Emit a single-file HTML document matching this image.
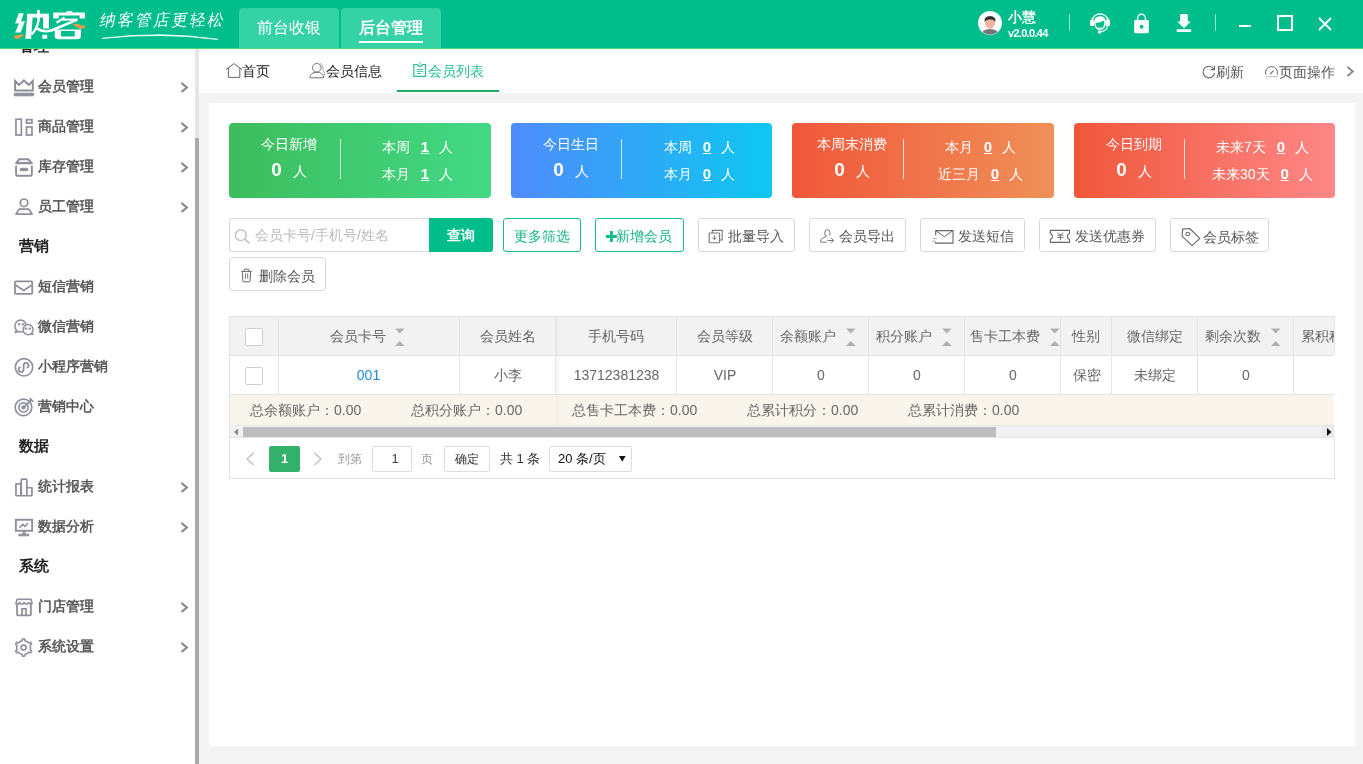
<!DOCTYPE html><html><head><meta charset="utf-8"><title>member list</title><style>
*{margin:0;padding:0;box-sizing:border-box}
html,body{width:1363px;height:764px;overflow:hidden;will-change:transform;background:#f4f4f4;font-family:"Liberation Sans",sans-serif;color:#333}
.a{position:absolute;white-space:nowrap}
svg{position:absolute;overflow:visible}
#hdr{position:absolute;left:0;top:0;width:1363px;height:49px;background:#00be8b;border-bottom:1px solid #4fd672;z-index:5}
.htab{position:absolute;top:8px;height:40px;background:#34d2a5;border-radius:4px 4px 0 0;color:#fff;font-size:16px;text-align:center;line-height:40px}
#side{position:absolute;left:0;top:49px;width:195px;height:715px;background:#fff;overflow:hidden}
.mi{position:absolute;left:38px;font-size:14px;font-weight:normal;color:#505050;line-height:20px;white-space:nowrap;-webkit-text-stroke:0.45px #505050}
.mh{position:absolute;left:19px;font-size:15px;font-weight:bold;color:#222;line-height:20px;white-space:nowrap}
#tabbar{position:absolute;left:199px;top:48px;width:1164px;height:45px;background:#fff}
#panel{position:absolute;left:209px;top:103px;width:1146px;height:643px;background:#fff;border-radius:2px}
.card{position:absolute;top:123px;width:262px;height:75px;border-radius:4px;color:#fff}
.btn{position:absolute;height:34px;border:1px solid #d9d9d9;border-radius:3px;background:#fff;font-size:14px;color:#555;line-height:34px;white-space:nowrap}
.th{position:absolute;top:317px;height:38px;line-height:38px;text-align:center;font-size:14px;color:#666;white-space:nowrap}
.td{position:absolute;top:356px;height:38px;line-height:38px;text-align:center;font-size:14px;color:#666;white-space:nowrap}
</style></head><body>
<div id="hdr">
<svg style="left:0;top:0" width="100" height="48" viewBox="0 0 100 48"><g fill="#fff"><path d="M18.7 13.3 H23.8 L20.9 21.35 H24.9 L20.7 32.5 H15.1 L19.1 23.6 H15.1 Z"/><path d="M27.3 13.8 H48.9 V17.4 H32.6 L31.1 38.7 H25.35 Z"/><rect x="43.15" y="13.8" width="5.8" height="14.7"/><rect x="37.1" y="10" width="2.7" height="11.5"/><rect x="42.3" y="34.7" width="4.9" height="4"/><rect x="66.7" y="11.1" width="5.6" height="2"/><path d="M53.3 12.5 H84.9 V18.5 H79.6 V15.6 H58.7 V18.5 H53.3 Z"/><path d="M54.7 29.4 H80.9 V36 Q80.9 39.2 77 39.2 H58.6 Q54.7 39.2 54.7 36 Z M60.9 31 V36.5 H74.7 V31 Z" fill-rule="evenodd"/></g><g fill="none" stroke="#fff"><path d="M38.4 21 Q37 29 31.5 34.5" stroke-width="2.4"/><path d="M37 28.3 Q43 33 52 30.2 L77.4 19.6" stroke-width="2.6"/><path d="M56.5 22.7 L64.5 17.6" stroke-width="2.3"/><path d="M61.3 19.6 H77.4" stroke-width="2"/></g><g fill="#f2994a"><path d="M14.2 35.4 L23.35 34.26 L24 35.15 L18.7 38.7 L14.7 38.7 Z"/><path d="M72.9 24.47 L76.5 23.58 L82.7 25.8 L84.94 25.36 L84.94 28 L80 28.9 L74.7 25.8 Z"/></g></svg>
<div class="a" style="left:99px;top:10px;font-size:16px;line-height:20px;color:#fff;font-style:italic;font-weight:normal;transform:rotate(-4deg)">纳</div>
<div class="a" style="left:117px;top:10px;font-size:16px;line-height:20px;color:#fff;font-style:italic;font-weight:normal;transform:rotate(-4deg)">客</div>
<div class="a" style="left:135px;top:10px;font-size:16px;line-height:20px;color:#fff;font-style:italic;font-weight:normal;transform:rotate(-4deg)">管</div>
<div class="a" style="left:153px;top:10px;font-size:16px;line-height:20px;color:#fff;font-style:italic;font-weight:normal;transform:rotate(-4deg)">店</div>
<div class="a" style="left:171px;top:10px;font-size:16px;line-height:20px;color:#fff;font-style:italic;font-weight:normal;transform:rotate(-4deg)">更</div>
<div class="a" style="left:189px;top:10px;font-size:16px;line-height:20px;color:#fff;font-style:italic;font-weight:normal;transform:rotate(-4deg)">轻</div>
<div class="a" style="left:207px;top:10px;font-size:16px;line-height:20px;color:#fff;font-style:italic;font-weight:normal;transform:rotate(-4deg)">松</div>
<svg style="left:100px;top:30px" width="125" height="12" viewBox="0 0 125 12"><path d="M2 8.4 Q60 0.5 118 9.4 Q60 2.2 2 8.4Z" fill="#fff" stroke="#fff" stroke-width="0.7"/></svg>
<div class="htab" style="left:239px;width:100px">前台收银</div>
<div class="htab" style="left:341px;width:100px;font-weight:bold">后台管理<div style="position:absolute;left:18px;top:33px;width:64px;height:2px;background:#fff"></div></div>
<svg style="left:978px;top:11px" width="24" height="24" viewBox="0 0 24 24"><circle cx="12" cy="12" r="12" fill="#fff"/><clipPath id="av"><circle cx="12" cy="12" r="11.5"/></clipPath><g clip-path="url(#av)"><path d="M3 24 Q4 18 12 18 Q20 18 21 24 Z" fill="#757575"/><ellipse cx="12" cy="12" rx="5" ry="5.8" fill="#f0b49e"/><path d="M6.5 11 Q6 5 12 5 Q18 5 17.5 11 Q16 8 12 8.5 Q8 8 6.5 11Z" fill="#333"/></g></svg>
<div class="a" style="left:1008px;top:7px;font-size:14px;line-height:20px;color:#fff;-webkit-text-stroke:0.4px #fff">小慧</div>
<div class="a" style="left:1008px;top:26px;font-size:11px;line-height:14px;color:#fff;font-weight:bold;letter-spacing:-0.7px">v2.0.0.44</div>
<div class="a" style="left:1069px;top:14px;width:1px;height:17px;background:rgba(255,255,255,.6)"></div>
<div class="a" style="left:1215px;top:14px;width:1px;height:17px;background:rgba(255,255,255,.6)"></div>
<svg style="left:1085px;top:8px" width="30" height="30" viewBox="0 0 30 30"><g fill="#fff" stroke="none"><rect x="5.1" y="11.8" width="4.1" height="6.2" rx="1"/><rect x="20.8" y="11.4" width="4.2" height="6.6" rx="1"/><path d="M9.2 14.5 Q9.2 8.2 15 8.2 Q20.8 8.2 20.8 14 L20.3 17.5 Q19.5 14 18.2 12.4 Q16 14.5 10 15.2 Z"/><circle cx="14.5" cy="24.1" r="1.6"/></g><g fill="none" stroke="#fff"><path d="M7 12.5 A8.3 8.3 0 0 1 23.2 12.5" stroke-width="1.6"/><path d="M9.8 14.5 Q10 20.5 15 21.8 Q19.8 20.5 20 15" stroke-width="1.4"/><path d="M13.2 19.7 Q14.8 20.6 16.5 19.7" stroke-width="0.9"/><path d="M22.6 17.5 Q22.2 23.2 15 24.1" stroke-width="1.2"/></g></svg>
<svg style="left:1134px;top:13px" width="16" height="21" viewBox="0 0 16 21"><path d="M3.6 7.5 V5.2 A3.9 3.9 0 0 1 11.4 5.2 V7.5" fill="none" stroke="#fff" stroke-width="1.4"/><rect x="0.2" y="7.1" width="14.6" height="13.1" rx="1.2" fill="#fff"/><circle cx="7.6" cy="13.75" r="1.9" fill="#00be8b"/></svg>
<svg style="left:1176px;top:13px" width="16" height="20" viewBox="0 0 16 20"><path d="M4.1 8.4 V2.2 Q4.1 0.9 5.4 0.9 H10.5 Q11.8 0.9 11.8 2.2 V8.4 H14.7 L8 15.3 L1.3 8.4 Z" fill="#fff"/><rect x="0.5" y="16.3" width="14.9" height="2.8" rx="1.4" fill="#fff"/></svg>
<div class="a" style="left:1239px;top:25px;width:12px;height:2px;background:#fff"></div>
<div class="a" style="left:1277px;top:15px;width:16px;height:16px;border:2px solid #fff"></div>
<svg style="left:1318px;top:17px" width="14" height="14" viewBox="0 0 14 14"><path d="M1 1 L13 13 M13 1 L1 13" stroke="#fff" stroke-width="1.8"/></svg>
</div>
<div id="side">
<div class="mh" style="top:-13px">管理</div>
<div class="mi" style="top:27px">会员管理</div>
<svg style="left:14px;top:28px" width="20" height="22" viewBox="0 0 20 22" fill="#8e8f9b" stroke="#8e8f9b"><path d="M1.1 13.5 V4 L5 7.9 L9.9 3.4 L14.9 7.9 L18.8 4 V13.5 Z" fill="none" stroke-width="2" stroke-linejoin="miter"/><rect x="0.1" y="16.2" width="19.7" height="2.6" rx="1"/></svg>
<svg style="left:180px;top:33px" width="9" height="11" viewBox="0 0 9 11"><path d="M1.5 1 L6.8 5.5 L1.5 10" fill="none" stroke="#858591" stroke-width="2.2"/></svg>
<div class="mi" style="top:67px">商品管理</div>
<svg style="left:14px;top:68px" width="20" height="22" viewBox="0 0 20 22" fill="#8e8f9b" stroke="#8e8f9b"><rect x="1.95" y="2.25" width="5.4" height="15.8" fill="none" stroke-width="1.7"/><rect x="12.45" y="2.65" width="5.5" height="3.4" fill="none" stroke-width="1.7"/><rect x="12.45" y="9.95" width="5.5" height="8.1" fill="none" stroke-width="1.7"/></svg>
<svg style="left:180px;top:73px" width="9" height="11" viewBox="0 0 9 11"><path d="M1.5 1 L6.8 5.5 L1.5 10" fill="none" stroke="#858591" stroke-width="2.2"/></svg>
<div class="mi" style="top:107px">库存管理</div>
<svg style="left:14px;top:108px" width="20" height="22" viewBox="0 0 20 22" fill="#8e8f9b" stroke="#8e8f9b"><path d="M2.2 6.1 L5.3 2.2 H14.2 L17.7 6.1 Z" fill="none" stroke-width="2.1" stroke-linejoin="round"/><path d="M2.05 8.7 V17.4 a1.3 1.3 0 0 0 1.3 1.3 H16.55 a1.3 1.3 0 0 0 1.3-1.3 V8.7" fill="none" stroke-width="1.9"/><rect x="6" y="11.3" width="7.9" height="2.4" rx="1.2"/></svg>
<svg style="left:180px;top:113px" width="9" height="11" viewBox="0 0 9 11"><path d="M1.5 1 L6.8 5.5 L1.5 10" fill="none" stroke="#858591" stroke-width="2.2"/></svg>
<div class="mi" style="top:147px">员工管理</div>
<svg style="left:14px;top:148px" width="20" height="22" viewBox="0 0 20 22" fill="#8e8f9b" stroke="#8e8f9b"><circle cx="10" cy="5.8" r="3.8" fill="none" stroke-width="1.7"/><path d="M1.9 17.1 L5.2 12.1 H14.7 L18.1 17.1 Z" fill="none" stroke-width="1.7" stroke-linejoin="round"/></svg>
<svg style="left:180px;top:153px" width="9" height="11" viewBox="0 0 9 11"><path d="M1.5 1 L6.8 5.5 L1.5 10" fill="none" stroke="#858591" stroke-width="2.2"/></svg>
<div class="mh" style="top:187px">营销</div>
<div class="mi" style="top:227px">短信营销</div>
<svg style="left:14px;top:228px" width="20" height="22" viewBox="0 0 20 22" fill="#8e8f9b" stroke="#8e8f9b"><rect x="0.95" y="4.45" width="17.3" height="12.4" rx="1" fill="none" stroke-width="1.8"/><path d="M1.5 8 L9.8 13.4 L17.8 8" fill="none" stroke-width="1.7"/></svg>
<div class="mi" style="top:267px">微信营销</div>
<svg style="left:14px;top:268px" width="20" height="22" viewBox="0 0 20 22" fill="#8e8f9b" stroke="#8e8f9b"><ellipse cx="6.6" cy="8.9" rx="5.7" ry="6" fill="none" stroke-width="1.5"/><path d="M2.6 13 L1.2 15.6 L4.6 14.5" fill="#fff" stroke-width="1.4" stroke-linejoin="round"/><rect x="4.4" y="6.8" width="1.5" height="1"/><rect x="8.4" y="6.8" width="1.5" height="1"/><path d="M17.6 15.8 L19.1 17.4 L16.4 17" fill="#fff" stroke-width="1.4" stroke-linejoin="round"/><ellipse cx="14.1" cy="12.55" rx="5" ry="5.1" fill="#fff" stroke-width="1.5"/><rect x="11.1" y="11.1" width="1.5" height="1"/><rect x="15" y="11.1" width="1.5" height="1"/></svg>
<div class="mi" style="top:307px">小程序营销</div>
<svg style="left:14px;top:308px" width="20" height="22" viewBox="0 0 20 22" fill="#8e8f9b" stroke="#8e8f9b"><circle cx="10" cy="10.3" r="8.7" fill="none" stroke-width="1.6"/><path d="M6.5 10 A2.5 2.5 0 1 0 9.6 12.6 V8.4 A2.5 2.5 0 1 1 12.8 10.8" fill="none" stroke-width="1.8"/></svg>
<div class="mi" style="top:347px">营销中心</div>
<svg style="left:14px;top:348px" width="20" height="22" viewBox="0 0 20 22" fill="#8e8f9b" stroke="#8e8f9b"><circle cx="9.5" cy="10.4" r="8.3" fill="none" stroke-width="1.7"/><circle cx="9.5" cy="10.4" r="4.6" fill="none" stroke-width="1.7"/><circle cx="9.5" cy="10.4" r="1.7"/><path d="M9.5 10.4 L17.2 3.2" stroke-width="1.7"/><path d="M15.8 1.3 L16.8 3.6 L19.2 4.4 L17.5 2.6Z" stroke-width="1.2" stroke-linejoin="round"/></svg>
<div class="mh" style="top:387px">数据</div>
<div class="mi" style="top:427px">统计报表</div>
<svg style="left:14px;top:428px" width="20" height="22" viewBox="0 0 20 22" fill="#8e8f9b" stroke="#8e8f9b"><path d="M1.95 18.75 V6.85 H6.75 V18.75 M7.25 18.75 V3.2 Q7.25 2.15 8.3 2.15 H11.8 Q12.85 2.15 12.85 3.2 V18.75 M12.85 10.75 H17.95 V17.9 a0.85 0.85 0 0 1 -0.85 0.85 H2.8 a0.85 0.85 0 0 1 -0.85 -0.85" fill="none" stroke-width="1.7" stroke-linejoin="round"/></svg>
<svg style="left:180px;top:433px" width="9" height="11" viewBox="0 0 9 11"><path d="M1.5 1 L6.8 5.5 L1.5 10" fill="none" stroke="#858591" stroke-width="2.2"/></svg>
<div class="mi" style="top:467px">数据分析</div>
<svg style="left:14px;top:468px" width="20" height="22" viewBox="0 0 20 22" fill="#8e8f9b" stroke="#8e8f9b"><rect x="1.85" y="2.75" width="16.3" height="11" fill="none" stroke-width="1.9"/><path d="M5.4 10.6 L8.9 7.4 L11 9.4 L13.9 6" fill="none" stroke-width="1.6"/><rect x="9.1" y="14" width="1.9" height="3.4"/><rect x="4.7" y="17.2" width="10.3" height="1.6" rx="0.5"/></svg>
<svg style="left:180px;top:473px" width="9" height="11" viewBox="0 0 9 11"><path d="M1.5 1 L6.8 5.5 L1.5 10" fill="none" stroke="#858591" stroke-width="2.2"/></svg>
<div class="mh" style="top:507px">系统</div>
<div class="mi" style="top:547px">门店管理</div>
<svg style="left:14px;top:548px" width="20" height="22" viewBox="0 0 20 22" fill="#8e8f9b" stroke="#8e8f9b"><path d="M3.05 7.3 V17.3 a1.1 1.1 0 0 0 1.1 1.1 H15.8 a1.1 1.1 0 0 0 1.1-1.1 V7.3" fill="none" stroke-width="1.8"/><path d="M1.9 6.6 L3.1 2.2 H17 L18.1 6.6 L16.2 7 L14.9 5.6 L13.6 7 L11.5 7 L10.2 5.6 L8.9 7 L6.7 7 L5.5 5.6 L4.2 7 Z" fill="none" stroke-width="1.6" stroke-linejoin="round"/><path d="M8 18 V11.9 H12 V18" fill="none" stroke-width="1.7"/></svg>
<svg style="left:180px;top:553px" width="9" height="11" viewBox="0 0 9 11"><path d="M1.5 1 L6.8 5.5 L1.5 10" fill="none" stroke="#858591" stroke-width="2.2"/></svg>
<div class="mi" style="top:587px">系统设置</div>
<svg style="left:14px;top:588px" width="20" height="22" viewBox="0 0 20 22" fill="#8e8f9b" stroke="#8e8f9b"><path d="M6.98 4.11 L8.26 3.73 L8.54 1.96 L10.66 1.96 L10.94 3.73 L13.91 5.08 L14.88 6.01 L16.55 5.36 L17.61 7.20 L16.22 8.32 L16.53 11.57 L16.22 12.88 L17.61 14.00 L16.55 15.84 L14.88 15.19 L12.22 17.09 L10.94 17.47 L10.66 19.24 L8.54 19.24 L8.26 17.47 L5.29 16.12 L4.32 15.19 L2.65 15.84 L1.59 14.00 L2.98 12.88 L2.67 9.63 L2.98 8.32 L1.59 7.20 L2.65 5.36 L4.32 6.01Z" fill="none" stroke-width="1.6" stroke-linejoin="round"/><circle cx="9.6" cy="10.6" r="2.5" fill="none" stroke-width="1.6"/></svg>
<svg style="left:180px;top:593px" width="9" height="11" viewBox="0 0 9 11"><path d="M1.5 1 L6.8 5.5 L1.5 10" fill="none" stroke="#858591" stroke-width="2.2"/></svg>
</div>
<div style="position:absolute;left:195px;top:48px;width:4px;height:716px;background:#e6e6e6"></div>
<div style="position:absolute;left:195px;top:138px;width:4px;height:626px;background:#a9a9a9"></div>
<div id="tabbar"></div>
<svg style="left:225px;top:62px" width="18" height="17" viewBox="0 0 18 17"><path d="M1 7.6 L9 1.6 L17 7.6 M3.4 5.9 V15.4 H14.8 V5.9" fill="none" stroke="#666" stroke-width="1"/></svg>
<div class="a" style="left:242px;top:61px;font-size:14px;line-height:20px;color:#222">首页</div>
<svg style="left:309px;top:62px" width="18" height="17" viewBox="0 0 18 17"><circle cx="7.8" cy="5.7" r="4.3" fill="none" stroke="#777" stroke-width="1"/><path d="M0.8 15.8 Q1.5 10.2 7.8 10.2 Q14 10.2 14.8 15.8 Z" fill="none" stroke="#777" stroke-width="1"/><path d="M11 1.6 Q14.6 2.5 13.8 7.5 Q15.6 9.5 15.6 13.5" fill="none" stroke="#999" stroke-width="0.9"/></svg>
<div class="a" style="left:326px;top:61px;font-size:14px;line-height:20px;color:#222">会员信息</div>
<svg style="left:413px;top:62px" width="14" height="16" viewBox="0 0 14 16"><path d="M4.3 2.5 H0.8 V14.4 H12.5 V2.5 H9.2" fill="none" stroke="#22c08f" stroke-width="1.2"/><path d="M4.2 2.2 L5.3 4.1 H8.2 L9.3 2.2 M5.9 1 H7.6" fill="none" stroke="#22c08f" stroke-width="1.2"/><path d="M3.6 7.4 H10.4 M3.6 9.4 H10.4 M3.9 11.5 H7.9" stroke="#22c08f" stroke-width="0.9"/></svg>
<div class="a" style="left:428px;top:61px;font-size:14px;line-height:20px;color:#22c08f">会员列表</div>
<div class="a" style="left:397px;top:90px;width:102px;height:2px;background:#25ab60"></div>
<svg style="left:1202px;top:65px" width="14" height="14" viewBox="0 0 14 14"><path d="M11.8 4 A5.8 5.8 0 1 0 12.6 8" fill="none" stroke="#666" stroke-width="1.1"/><path d="M12.5 0.8 V4.6 H8.7" fill="none" stroke="#666" stroke-width="1.1"/></svg>
<div class="a" style="left:1216px;top:62px;font-size:14px;line-height:20px;color:#555">刷新</div>
<svg style="left:1264px;top:65px" width="15" height="13" viewBox="0 0 15 13"><path d="M1.86 9.6 A6 6 0 1 1 13.14 9.6" fill="none" stroke="#666" stroke-width="1"/><path d="M1.5 11.6 H13.5" stroke="#c8c8c8" stroke-width="1.2"/><path d="M6 9.2 L9.6 5.6" stroke="#666" stroke-width="1.1"/></svg>
<div class="a" style="left:1279px;top:62px;font-size:14px;line-height:20px;color:#555">页面操作</div>
<svg style="left:1346px;top:66px" width="9" height="11" viewBox="0 0 9 11"><path d="M1.5 1 L6.8 5.5 L1.5 10" fill="none" stroke="#8b8b97" stroke-width="2"/></svg>
<div id="panel"></div>
<div class="card" style="left:229px;width:262px;background:linear-gradient(90deg,#3dbd5d,#42d985)">
<div class="a" style="left:0;width:120px;top:11px;text-align:center;font-size:14px;line-height:20px">今日新增</div>
<div class="a" style="left:0;width:120px;top:35px;text-align:center;font-size:14px;line-height:24px"><b style="font-size:19px;margin-right:11px">0</b>人</div>
<div class="a" style="left:111px;top:16px;width:1px;height:40px;background:rgba(255,255,255,.8)"></div>
<div class="a" style="left:112px;width:153px;top:14px;text-align:center;font-size:14px;line-height:20px">本周<b style="font-size:15px;text-decoration:underline;margin:0 10px 0 11px">1</b>人</div>
<div class="a" style="left:112px;width:153px;top:41px;text-align:center;font-size:14px;line-height:20px">本月<b style="font-size:15px;text-decoration:underline;margin:0 10px 0 11px">1</b>人</div>
</div>
<div class="card" style="left:511px;width:261px;background:linear-gradient(90deg,#4f8bfc,#0ec7f1)">
<div class="a" style="left:0;width:120px;top:11px;text-align:center;font-size:14px;line-height:20px">今日生日</div>
<div class="a" style="left:0;width:120px;top:35px;text-align:center;font-size:14px;line-height:24px"><b style="font-size:19px;margin-right:11px">0</b>人</div>
<div class="a" style="left:110px;top:16px;width:1px;height:40px;background:rgba(255,255,255,.8)"></div>
<div class="a" style="left:112px;width:153px;top:14px;text-align:center;font-size:14px;line-height:20px">本周<b style="font-size:15px;text-decoration:underline;margin:0 10px 0 11px">0</b>人</div>
<div class="a" style="left:112px;width:153px;top:41px;text-align:center;font-size:14px;line-height:20px">本月<b style="font-size:15px;text-decoration:underline;margin:0 10px 0 11px">0</b>人</div>
</div>
<div class="card" style="left:792px;width:262px;background:linear-gradient(90deg,#f0573a,#f09058)">
<div class="a" style="left:0;width:120px;top:11px;text-align:center;font-size:14px;line-height:20px">本周末消费</div>
<div class="a" style="left:0;width:120px;top:35px;text-align:center;font-size:14px;line-height:24px"><b style="font-size:19px;margin-right:11px">0</b>人</div>
<div class="a" style="left:111px;top:16px;width:1px;height:40px;background:rgba(255,255,255,.8)"></div>
<div class="a" style="left:112px;width:153px;top:14px;text-align:center;font-size:14px;line-height:20px">本月<b style="font-size:15px;text-decoration:underline;margin:0 10px 0 11px">0</b>人</div>
<div class="a" style="left:112px;width:153px;top:41px;text-align:center;font-size:14px;line-height:20px">近三月<b style="font-size:15px;text-decoration:underline;margin:0 10px 0 11px">0</b>人</div>
</div>
<div class="card" style="left:1074px;width:261px;background:linear-gradient(90deg,#f0573a,#fe8787)">
<div class="a" style="left:0;width:120px;top:11px;text-align:center;font-size:14px;line-height:20px">今日到期</div>
<div class="a" style="left:0;width:120px;top:35px;text-align:center;font-size:14px;line-height:24px"><b style="font-size:19px;margin-right:11px">0</b>人</div>
<div class="a" style="left:110px;top:16px;width:1px;height:40px;background:rgba(255,255,255,.8)"></div>
<div class="a" style="left:112px;width:153px;top:14px;text-align:center;font-size:14px;line-height:20px">未来7天<b style="font-size:15px;text-decoration:underline;margin:0 10px 0 11px">0</b>人</div>
<div class="a" style="left:112px;width:153px;top:41px;text-align:center;font-size:14px;line-height:20px">未来30天<b style="font-size:15px;text-decoration:underline;margin:0 10px 0 11px">0</b>人</div>
</div>
<div class="a" style="left:229px;top:218px;width:200px;height:34px;border:1px solid #d9d9d9;border-right:0;border-radius:3px 0 0 3px;background:#fff"></div>
<svg style="left:232px;top:227px" width="20" height="19" viewBox="0 0 20 19"><circle cx="8.8" cy="8.2" r="5.4" fill="none" stroke="#c4c4c4" stroke-width="1.5"/><path d="M12.7 12.2 L17.3 16.4" stroke="#c4c4c4" stroke-width="1.7"/></svg>
<div class="a" style="left:255px;top:225px;font-size:14px;line-height:20px;color:#bbb">会员卡号/手机号/姓名</div>
<div class="a" style="left:429px;top:218px;width:64px;height:34px;background:#00bd8a;border-radius:0 3px 3px 0;color:#fff;font-weight:bold;font-size:14px;line-height:34px;text-align:center">查询</div>
<div class="btn" style="left:503px;top:218px;width:78px;border-color:#14bd8b;color:#17b488;text-align:center">更多筛选</div>
<div class="btn" style="left:595px;top:218px;width:89px;border-color:#14bd8b;color:#17b488"><svg style="left:9px;top:12px" width="12" height="12" viewBox="0 0 12 12"><path d="M0.9 5.5 H11.9 M6.4 0 V11" stroke="#12bd8a" stroke-width="2.9"/></svg><span class="a" style="left:20px;top:0">新增会员</span></div>
<div class="btn" style="left:698px;top:218px;width:97px"><svg style="left:9px;top:9px" width="16" height="16" viewBox="0 0 16 16"><path d="M4.3 5 V2.4 H14.2 V12 H11.6" fill="none" stroke="#777" stroke-width="1.1"/><rect x="1.2" y="5" width="10.4" height="9.7" rx="0.8" fill="#fff" stroke="#777" stroke-width="1.1"/><path d="M6.4 7.2 V11.5 M4.1 9.4 L6.4 11.7 L8.7 9.4" fill="none" stroke="#777" stroke-width="1"/></svg><span class="a" style="left:29px;top:0px">批量导入</span></div>
<div class="btn" style="left:809px;top:218px;width:97px"><svg style="left:10px;top:9px" width="16" height="16" viewBox="0 0 16 16"><path d="M6.9 8.3 Q4.4 7.8 4.6 4.9 Q4.8 1.6 7.4 1.6 Q10.1 1.6 10 4.9 Q10 6.6 9.3 7.7" fill="none" stroke="#777" stroke-width="1"/><path d="M6 8.6 Q2.4 9.8 0.7 11.8 V14.2 H6.9" fill="none" stroke="#777" stroke-width="1"/><path d="M7.4 12.5 H13.6 M11.1 10.1 L13.7 12.5 L11.1 14.9" fill="none" stroke="#777" stroke-width="1"/></svg><span class="a" style="left:29px;top:0px">会员导出</span></div>
<div class="btn" style="left:920px;top:218px;width:105px"><svg style="left:10px;top:9px" width="24" height="18" viewBox="0 0 24 18"><path d="M4.7 7.5 V2.6 H22 V15.1 H4.7 V14" fill="none" stroke="#666" stroke-width="1.1"/><path d="M5 2.8 L13.3 8.6 L21.7 2.8" fill="none" stroke="#666" stroke-width="1"/><path d="M2.3 10.5 H5.8 M1.2 13.2 H4.7" stroke="#999" stroke-width="0.9"/></svg><span class="a" style="left:37px;top:0px">发送短信</span></div>
<div class="btn" style="left:1039px;top:218px;width:117px"><svg style="left:9px;top:9px" width="22" height="17" viewBox="0 0 22 17"><path d="M1.3 2.4 H20.5 V5.5 Q18.3 6.3 18.3 8.4 Q18.3 10.4 20.5 11.2 V14.4 H1.3 V11.2 Q3.5 10.4 3.5 8.4 Q3.5 6.3 1.3 5.5 Z" fill="none" stroke="#666" stroke-width="1.1" stroke-linejoin="round"/><path d="M9 4.6 L11.4 7.1 L13.8 4.6 M8.3 7.2 H14.5 M8.3 9.4 H14.5 M11.4 7.2 V12.3" fill="none" stroke="#666" stroke-width="0.9"/></svg><span class="a" style="left:35px;top:0px">发送优惠券</span></div>
<div class="btn" style="left:1170px;top:218px;width:99px"><svg style="left:10px;top:8px" width="20" height="20" viewBox="0 0 20 20"><path d="M1.6 2.1 L8.7 1.5 L18.8 11.4 L11.1 18.7 L1.2 9.4 Z" fill="none" stroke="#666" stroke-width="1.1" stroke-linejoin="round"/><circle cx="6.7" cy="7" r="1.8" fill="none" stroke="#666" stroke-width="1.1"/></svg><span class="a" style="left:32px;top:1px">会员标签</span></div>
<div class="btn" style="left:229px;top:257px;width:97px"><svg style="left:10px;top:9px" width="13" height="16" viewBox="0 0 13 16"><path d="M1.1 4.4 H11.8 M4.3 4.2 V2.6 Q4.3 2.2 4.7 2.2 H8.4 Q8.8 2.2 8.8 2.6 V4.2" fill="none" stroke="#666" stroke-width="1"/><path d="M2.2 4.8 L2.9 14 Q3 14.8 3.8 14.8 H9.1 Q9.9 14.8 10 14 L10.7 4.8" fill="none" stroke="#666" stroke-width="1"/><path d="M5.4 6.2 V11.7 M7.7 6.2 V11.7" stroke="#777" stroke-width="1"/></svg><span class="a" style="left:29px;top:1px">删除会员</span></div>
<div class="a" style="left:229px;top:316px;width:1106px;height:163px;border:1px solid #e3e3e3;border-right:0;background:#fff"></div>
<div class="a" style="left:1334px;top:437px;width:1px;height:42px;background:#e3e3e3"></div>
<div class="a" style="left:1334px;top:317px;width:1px;height:38px;background:#e8e8e8"></div>
<div class="a" style="left:230px;top:317px;width:1104px;height:39px;background:#f2f2f2;border-bottom:1px solid #e3e3e3"></div>
<div class="a" style="left:230px;top:394px;width:1104px;height:31px;background:#f9f5ec;border-top:1px solid #e3e3e3"></div>
<div class="a" style="left:230px;top:317px;width:1104px;height:77px;overflow:hidden">
<div class="a" style="left:48px;top:0;width:1px;height:77px;background:#e3e3e3"></div>
<div class="a" style="left:229px;top:0;width:1px;height:77px;background:#e3e3e3"></div>
<div class="a" style="left:325px;top:0;width:1px;height:77px;background:#e3e3e3"></div>
<div class="a" style="left:446px;top:0;width:1px;height:77px;background:#e3e3e3"></div>
<div class="a" style="left:542px;top:0;width:1px;height:77px;background:#e3e3e3"></div>
<div class="a" style="left:638px;top:0;width:1px;height:77px;background:#e3e3e3"></div>
<div class="a" style="left:734px;top:0;width:1px;height:77px;background:#e3e3e3"></div>
<div class="a" style="left:830px;top:0;width:1px;height:77px;background:#e3e3e3"></div>
<div class="a" style="left:881px;top:0;width:1px;height:77px;background:#e3e3e3"></div>
<div class="a" style="left:967px;top:0;width:1px;height:77px;background:#e3e3e3"></div>
<div class="a" style="left:1063px;top:0;width:1px;height:77px;background:#e3e3e3"></div>
<div class="a" style="left:100px;top:0;height:38px;line-height:38px;font-size:14px;color:#666">会员卡号</div>
<svg style="left:165px;top:10px" width="10" height="19" viewBox="0 0 10 19"><path d="M0 1.4 H9.6 L4.8 6.4Z M0 19 H9.6 L4.8 14Z" fill="#b0b0b0"/></svg>
<div class="a" style="left:48px;top:39px;width:181px;height:38px;line-height:38px;font-size:14px;color:#1a8fd8;text-align:center">001</div>
<div class="a" style="left:250px;top:0;height:38px;line-height:38px;font-size:14px;color:#666">会员姓名</div>
<div class="a" style="left:230px;top:39px;width:96px;height:38px;line-height:38px;font-size:14px;color:#666;text-align:center">小李</div>
<div class="a" style="left:358px;top:0;height:38px;line-height:38px;font-size:14px;color:#666">手机号码</div>
<div class="a" style="left:326px;top:39px;width:121px;height:38px;line-height:38px;font-size:14px;color:#666;text-align:center">13712381238</div>
<div class="a" style="left:467px;top:0;height:38px;line-height:38px;font-size:14px;color:#666">会员等级</div>
<div class="a" style="left:447px;top:39px;width:96px;height:38px;line-height:38px;font-size:14px;color:#666;text-align:center">VIP</div>
<div class="a" style="left:550px;top:0;height:38px;line-height:38px;font-size:14px;color:#666">余额账户</div>
<svg style="left:616px;top:10px" width="10" height="19" viewBox="0 0 10 19"><path d="M0 1.4 H9.6 L4.8 6.4Z M0 19 H9.6 L4.8 14Z" fill="#b0b0b0"/></svg>
<div class="a" style="left:543px;top:39px;width:96px;height:38px;line-height:38px;font-size:14px;color:#666;text-align:center">0</div>
<div class="a" style="left:646px;top:0;height:38px;line-height:38px;font-size:14px;color:#666">积分账户</div>
<svg style="left:712px;top:10px" width="10" height="19" viewBox="0 0 10 19"><path d="M0 1.4 H9.6 L4.8 6.4Z M0 19 H9.6 L4.8 14Z" fill="#b0b0b0"/></svg>
<div class="a" style="left:639px;top:39px;width:96px;height:38px;line-height:38px;font-size:14px;color:#666;text-align:center">0</div>
<div class="a" style="left:740px;top:0;height:38px;line-height:38px;font-size:14px;color:#666">售卡工本费</div>
<svg style="left:820px;top:10px" width="10" height="19" viewBox="0 0 10 19"><path d="M0 1.4 H9.6 L4.8 6.4Z M0 19 H9.6 L4.8 14Z" fill="#b0b0b0"/></svg>
<div class="a" style="left:735px;top:39px;width:96px;height:38px;line-height:38px;font-size:14px;color:#666;text-align:center">0</div>
<div class="a" style="left:842px;top:0;height:38px;line-height:38px;font-size:14px;color:#666">性别</div>
<div class="a" style="left:831px;top:39px;width:51px;height:38px;line-height:38px;font-size:14px;color:#666;text-align:center">保密</div>
<div class="a" style="left:897px;top:0;height:38px;line-height:38px;font-size:14px;color:#666">微信绑定</div>
<div class="a" style="left:882px;top:39px;width:86px;height:38px;line-height:38px;font-size:14px;color:#666;text-align:center">未绑定</div>
<div class="a" style="left:975px;top:0;height:38px;line-height:38px;font-size:14px;color:#666">剩余次数</div>
<svg style="left:1041px;top:10px" width="10" height="19" viewBox="0 0 10 19"><path d="M0 1.4 H9.6 L4.8 6.4Z M0 19 H9.6 L4.8 14Z" fill="#b0b0b0"/></svg>
<div class="a" style="left:968px;top:39px;width:96px;height:38px;line-height:38px;font-size:14px;color:#666;text-align:center">0</div>
<div class="a" style="left:1071px;top:0;height:38px;line-height:38px;font-size:14px;color:#666">累积积分</div>
<div class="a" style="left:1064px;top:39px;width:107px;height:38px;line-height:38px;font-size:14px;color:#666;text-align:center"></div>
</div>
<div class="a" style="left:556px;top:317px;width:5px;height:108px;background:linear-gradient(90deg,rgba(0,0,0,.035),rgba(0,0,0,0))"></div>
<div class="a" style="left:245px;top:328px;width:18px;height:18px;border:1px solid #cfcfcf;border-radius:2px;background:#fff"></div>
<div class="a" style="left:245px;top:367px;width:18px;height:18px;border:1px solid #cfcfcf;border-radius:2px;background:#fff"></div>
<div class="a" style="left:250px;top:400px;font-size:14px;line-height:20px;color:#666">总余额账户：0.00</div>
<div class="a" style="left:411px;top:400px;font-size:14px;line-height:20px;color:#666">总积分账户：0.00</div>
<div class="a" style="left:572px;top:400px;font-size:14px;line-height:20px;color:#666">总售卡工本费：0.00</div>
<div class="a" style="left:747px;top:400px;font-size:14px;line-height:20px;color:#666">总累计积分：0.00</div>
<div class="a" style="left:908px;top:400px;font-size:14px;line-height:20px;color:#666">总累计消费：0.00</div>
<div class="a" style="left:230px;top:425px;width:1104px;height:13px;background:#f1f1f1;border-top:1px solid #e8e8e8;border-bottom:1px solid #e6e6e6"></div>
<div class="a" style="left:1322px;top:426px;width:12px;height:11px;background:#e9e9e9"></div>
<div class="a" style="left:243px;top:427px;width:753px;height:10px;background:#bebebe"></div>
<svg style="left:233px;top:428px" width="6" height="8"><path d="M5 0.5 V7.5 L1 4Z" fill="#888"/></svg>
<svg style="left:1326px;top:428px" width="6" height="8"><path d="M1 0 V8 L5.5 4Z" fill="#111"/></svg>
<svg style="left:245px;top:452px" width="10" height="14"><path d="M8.5 1 L2 7 L8.5 13" fill="none" stroke="#bbb" stroke-width="1.2"/></svg>
<div class="a" style="left:269px;top:446px;width:31px;height:26px;background:#33b06a;border-radius:2px;color:#fff;font-weight:bold;font-size:13px;line-height:26px;text-align:center">1</div>
<svg style="left:313px;top:452px" width="10" height="14"><path d="M1.5 1 L8 7 L1.5 13" fill="none" stroke="#bbb" stroke-width="1.2"/></svg>
<div class="a" style="left:338px;top:449px;font-size:12px;line-height:20px;color:#999">到第</div>
<div class="a" style="left:372px;top:446px;width:40px;height:26px;border:1px solid #ddd;border-radius:2px;font-size:13px;line-height:24px;text-align:center;color:#444;padding-left:6px">1</div>
<div class="a" style="left:421px;top:449px;font-size:12px;line-height:20px;color:#999">页</div>
<div class="a" style="left:444px;top:446px;width:46px;height:26px;border:1px solid #ddd;border-radius:2px;font-size:12px;line-height:24px;text-align:center;color:#333">确定</div>
<div class="a" style="left:500px;top:449px;font-size:13px;line-height:20px;color:#333">共 1 条</div>
<div class="a" style="left:549px;top:446px;width:83px;height:26px;border:1px solid #ddd;border-radius:2px;font-size:13px;line-height:24px;color:#111;padding-left:8px">20 条/页<svg style="left:69px;top:9px" width="7" height="6" viewBox="0 0 7 6"><path d="M0 0 H6.6 L3.3 5.8Z" fill="#111"/></svg></div>
</body></html>
